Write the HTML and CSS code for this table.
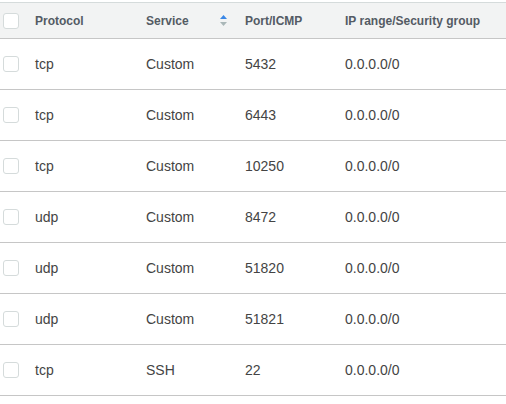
FILE: index.html
```html
<!DOCTYPE html>
<html>
<head>
<meta charset="utf-8">
<link rel="stylesheet" href="styles.css">
</head>
<body>
<table class="rules">
  <thead>
    <tr>
      <th class="c-check"><span class="cb"></span></th>
      <th class="c-proto">Protocol</th>
      <th class="c-svc"><span class="svc-head">Service<svg class="sort" width="7" height="11" viewBox="0 0 7 11"><path d="M3.5 0 L7 4 L0 4 Z" fill="#3a87e6"/><path d="M0 7 L7 7 L3.5 11 Z" fill="#aab7b8"/></svg></span></th>
      <th class="c-port">Port/ICMP</th>
      <th class="c-ip">IP range/Security group</th>
    </tr>
  </thead>
  <tbody>
    <tr><td class="c-check"><span class="cb"></span></td><td>tcp</td><td>Custom</td><td>5432</td><td>0.0.0.0/0</td></tr>
    <tr><td class="c-check"><span class="cb"></span></td><td>tcp</td><td>Custom</td><td>6443</td><td>0.0.0.0/0</td></tr>
    <tr><td class="c-check"><span class="cb"></span></td><td>tcp</td><td>Custom</td><td>10250</td><td>0.0.0.0/0</td></tr>
    <tr><td class="c-check"><span class="cb"></span></td><td>udp</td><td>Custom</td><td>8472</td><td>0.0.0.0/0</td></tr>
    <tr><td class="c-check"><span class="cb"></span></td><td>udp</td><td>Custom</td><td>51820</td><td>0.0.0.0/0</td></tr>
    <tr><td class="c-check"><span class="cb"></span></td><td>udp</td><td>Custom</td><td>51821</td><td>0.0.0.0/0</td></tr>
    <tr><td class="c-check"><span class="cb"></span></td><td>tcp</td><td>SSH</td><td>22</td><td>0.0.0.0/0</td></tr>
  </tbody>
</table>
</body>
</html>
```
FILE: styles.css
```css
html, body {
  margin: 0;
  padding: 0;
  background: #ffffff;
}
body {
  padding-top: 2px;
  font-family: "Liberation Sans", Arial, sans-serif;
}
.rules {
  width: 506px;
  border-collapse: collapse;
  table-layout: fixed;
}
.rules th, .rules td {
  padding: 0;
  text-align: left;
  white-space: nowrap;
}
.rules thead tr {
  background: #f2f3f3;
  border-top: 1px solid #d5dbdb;
  border-bottom: 1px solid #c6c6c6;
}
.rules th {
  height: 35px;
  font-size: 12px;
  font-weight: bold;
  color: #545b64;
}
.rules tbody tr {
  border-bottom: 1px solid #c6c6c6;
}
.rules td {
  height: 50px;
  font-size: 14px;
  color: #444444;
}
.c-check { width: 35px; }
.c-proto { width: 111px; }
.c-svc { width: 99px; }
.c-port { width: 100px; }
.c-ip { width: auto; }
.cb {
  display: block;
  width: 14px;
  height: 14px;
  margin-left: 3px;
  border: 1px solid #d5dbdb;
  border-radius: 3px;
  background: #ffffff;
}
.svc-head {
  display: flex;
  align-items: center;
}
.sort {
  margin-left: 31px;
}
```
